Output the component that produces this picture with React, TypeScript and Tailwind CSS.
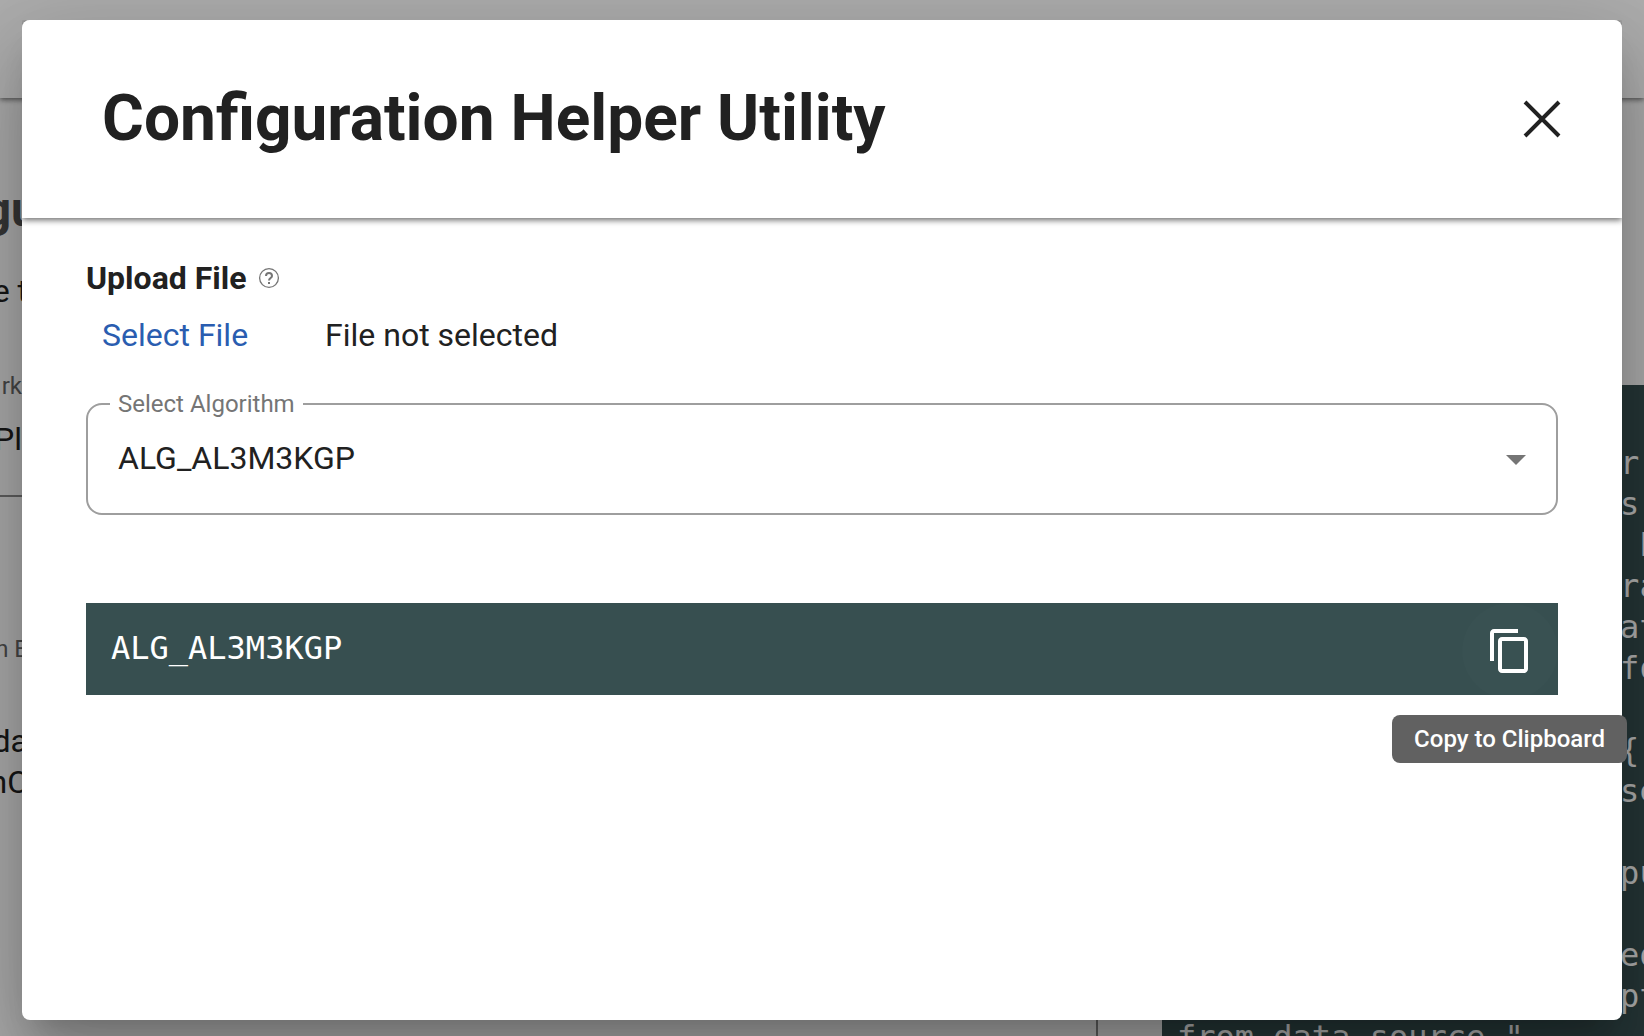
import React from "react";

/* Each string is one row of the listing; the indent keeps the monospace columns. */
const codeLines: string[] = [
  "                       r",
  "                       s",
  "                        h",
  "                       ra",
  "                       at",
  "                       fo",
  "",
  "                       {",
  "                       se",
  "",
  "                       pu",
  '                        "',
  "                       ed",
  "                       pt",
  'from data source."',
];

function Backdrop() {
  return (
    <div aria-hidden="true" className="absolute inset-0 flex flex-col overflow-hidden bg-[#fafafa]">
      <div className="h-[98px] shrink-0 bg-white shadow-[0_2px_5px_rgba(0,0,0,0.5)]" />
      <div className="flex min-h-0 flex-1">
        <div className="flex w-[1098px] shrink-0 flex-col border-r-2 border-[#8a8a8a]">
          <div className="flex w-12 flex-col items-end whitespace-nowrap text-[32px] leading-[41px] text-[#212121]">
            <p className="mt-20 pr-2.5 text-5xl leading-[64px] font-bold text-[#4f4f4f]">gu</p>
            <p className="mt-[29px] pr-5">e t</p>
            <p className="mt-[54px] pr-[26px] text-2xl leading-10 text-[#666]">rk</p>
            <p className="mt-[13px] pr-[26px]">Pl</p>
            <div className="mt-[35px] h-0.5 w-full bg-[#8a8a8a]" />
            <p className="mt-[132px] pr-5 text-2xl leading-10 text-[#666]">n E</p>
            <p className="mt-[52px] pr-5">da</p>
            <p className="pr-5">nC</p>
          </div>
        </div>
        <pre className="mt-[287px] ml-16 flex-1 overflow-hidden bg-[#374f50] pt-[58px] pl-[15px] font-['DejaVu_Sans_Mono',monospace] text-[32px] leading-[41px] text-white">
          {codeLines.join("\n")}
        </pre>
      </div>
      <div className="absolute inset-0 bg-black/32" />
    </div>
  );
}

function CloseIcon() {
  return (
    <svg viewBox="0 0 40 40" className="size-10" fill="none" stroke="currentColor" strokeWidth="4" aria-hidden="true">
      <path d="M3 3 37 37M37 3 3 37" />
    </svg>
  );
}

function HelpIcon() {
  return (
    <svg viewBox="0 0 24 24" className="size-6" fill="none" stroke="currentColor" aria-hidden="true">
      <circle cx="12" cy="12" r="9.4" strokeWidth="1.3" />
      <path d="M9 10a3 3 0 0 1 6 0c0 2-3 2.200-3 4.600" strokeWidth="2" />
      <path d="M12 16v2" strokeWidth="2" />
    </svg>
  );
}

function CopyIcon() {
  return (
    <svg viewBox="0 0 24 24" className="size-12" fill="currentColor" aria-hidden="true">
      <path d="M16 1H4c-1.100 0-2 .9-2 2v14h2V3h12V1zm3 4H8c-1.100 0-2 .9-2 2v14c0 1.100.9 2 2 2h11c1.100 0 2-.9 2-2V7c0-1.100-.9-2-2-2zm0 16H8V7h11v14z" />
    </svg>
  );
}

export default function App() {
  return (
    <div className="relative flex h-screen overflow-hidden px-[22px] pt-5 pb-4 font-[Roboto,sans-serif] text-[32px] leading-10 text-[#212121]">
      <Backdrop />
      <section
        role="dialog"
        aria-labelledby="dialog-title"
        className="relative flex flex-1 flex-col rounded-lg bg-white shadow-[0_22px_30px_-14px_rgba(0,0,0,0.2),0_48px_76px_6px_rgba(0,0,0,0.14),0_18px_92px_16px_rgba(0,0,0,0.12)]"
      >
        <header className="flex h-[198px] shrink-0 items-center justify-between rounded-t-lg bg-white pr-[60px] pl-20 shadow-[0_2px_6px_rgba(0,0,0,0.6)] [clip-path:inset(0_0_-12px_0)]">
          <h1 id="dialog-title" className="text-[64px] leading-[80px] font-bold">
            Configuration Helper Utility
          </h1>
          <button type="button" aria-label="Close">
            <CloseIcon />
          </button>
        </header>

        <div className="px-16 pt-10">
          <div className="flex items-center gap-2.5">
            <h2 className="font-bold">Upload File</h2>
            <button type="button" aria-label="Help" className="text-[#757575]">
              <HelpIcon />
            </button>
          </div>

          <div className="mt-[17px] flex items-center gap-[77px] pl-4">
            <button type="button" className="text-[#2a5db0]">
              Select File
            </button>
            <span>File not selected</span>
          </div>

          <div className="relative mt-12">
            <label htmlFor="algorithm" className="absolute -top-[15px] left-6 bg-white px-2 text-2xl leading-8 text-[#757575]">
              Select Algorithm
            </label>
            <select
              id="algorithm"
              className="h-28 w-full appearance-none rounded-2xl border-2 border-[#9e9e9e] bg-white px-[30px] pb-0.5 text-[32px]"
            >
              <option>ALG_AL3M3KGP</option>
            </select>
            <svg
              viewBox="0 0 20 10"
              className="pointer-events-none absolute top-[52px] right-8 h-2.5 w-5"
              fill="#757575"
              aria-hidden="true"
            >
              <path d="M0 0h20L10 10z" />
            </svg>
          </div>

          <div className="relative mt-22 flex h-[92px] items-start justify-between bg-[#374f50] text-white">
            <code className="pt-[25px] pl-[25px] font-['DejaVu_Sans_Mono',monospace]">ALG_AL3M3KGP</code>
            <button
              type="button"
              aria-label="Copy to Clipboard"
              className="flex size-24 items-center justify-center rounded-full bg-white/1"
            >
              <CopyIcon />
            </button>
            <div
              role="tooltip"
              className="absolute top-28 -right-[69px] rounded-lg bg-[#616161] px-[22px] py-2 text-2xl leading-8 font-medium whitespace-nowrap"
            >
              Copy to Clipboard
            </div>
          </div>
        </div>
      </section>
    </div>
  );
}
